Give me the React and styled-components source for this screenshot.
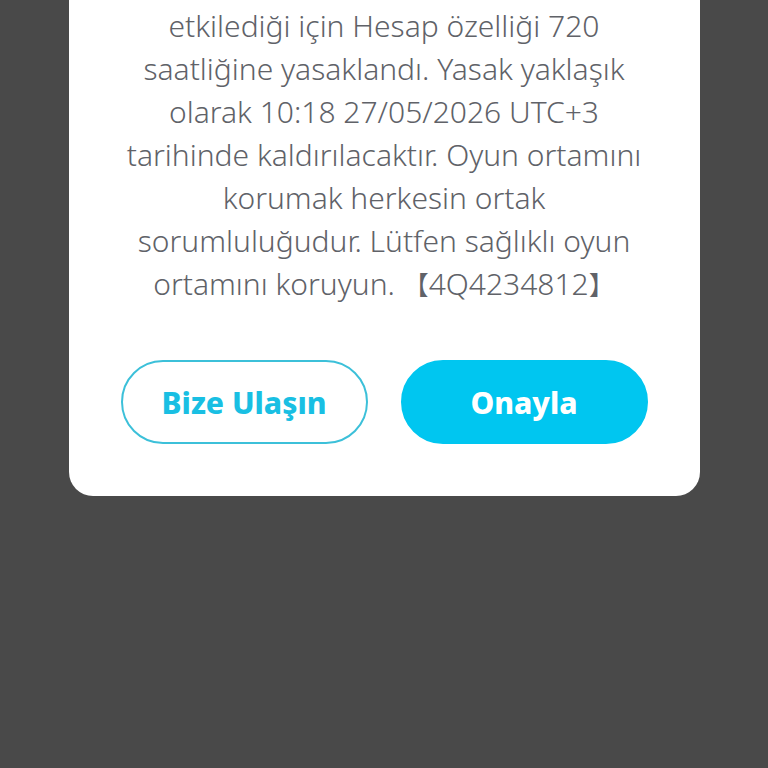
import React from "react";
import styled, { createGlobalStyle } from "styled-components";

const GlobalStyle = createGlobalStyle`
  html, body {
    margin: 0;
    padding: 0;
    background: #494949;
    overflow: hidden;
  }
  body {
    font-family: "Noto Sans", "Noto Sans CJK SC", sans-serif;
  }
`;

const Screen = styled.div`
  width: 768px;
  height: 768px;
  background: #494949;
  display: flex;
  justify-content: center;
  align-items: flex-start;
`;

const Card = styled.div`
  width: 631px;
  margin-top: -60px;
  padding: 64px 40px 52px;
  box-sizing: border-box;
  background: #ffffff;
  border-radius: 24px;
  display: flex;
  flex-direction: column;
  align-items: center;
`;

const Message = styled.p`
  margin: 0;
  text-align: center;
  color: #606268;
  font-size: 30px;
  font-weight: 300;
  line-height: 43px;
`;

const Line = styled.span`
  display: block;
  white-space: nowrap;
`;

const Bracket = styled.span`
  font-family: "Noto Sans CJK SC", sans-serif;
  font-size: 26px;
`;

const Buttons = styled.div`
  display: flex;
  gap: 33px;
  margin-top: 55px;
  width: 100%;
  padding: 0 12px;
  box-sizing: border-box;
`;

const Button = styled.button`
  flex: 1;
  height: 84px;
  border-radius: 42px;
  font-family: "Noto Sans", sans-serif;
  font-weight: 800;
  font-size: 30px;
  cursor: pointer;
  border: 2px solid ${p => (p.$primary ? "#00c6f0" : "#3cc0d9")};
  background: ${p => (p.$primary ? "#00c6f0" : "#ffffff")};
  color: ${p => (p.$primary ? "#ffffff" : "#19bfe3")};
`;

const lines = [
  "etkilediği için Hesap özelliği 720",
  "saatliğine yasaklandı. Yasak yaklaşık",
  "olarak 10:18 27/05/2026 UTC+3",
  "tarihinde kaldırılacaktır. Oyun ortamını",
  "korumak herkesin ortak",
  "sorumluluğudur. Lütfen sağlıklı oyun",
];

export default function App() {
  return (
    <Screen>
      <GlobalStyle />
      <Card>
        <Message>
          {lines.map(l => (
            <Line key={l}>{l}</Line>
          ))}
          <Line>
            ortamını koruyun. <Bracket>【</Bracket>4Q4234812<Bracket>】</Bracket>
          </Line>
        </Message>
        <Buttons>
          <Button>Bize Ulaşın</Button>
          <Button $primary>Onayla</Button>
        </Buttons>
      </Card>
    </Screen>
  );
}
